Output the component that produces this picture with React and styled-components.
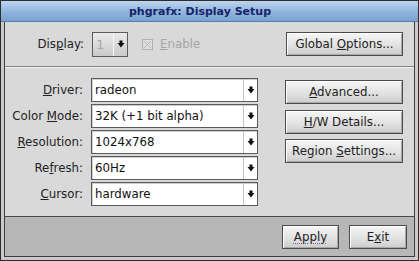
import React from 'react';
import styled, { createGlobalStyle } from 'styled-components';

const GlobalStyle = createGlobalStyle`
  html, body {
    margin: 0;
    padding: 0;
    background: #c8c8c8;
  }
  * {
    box-sizing: border-box;
  }
`;

const ArrowDown = () => (
  <svg width='8' height='8' viewBox='0 0 8 8'>
    <polygon points='2.5,0.5 5.5,0.5 5.5,3 7.5,3 4,7.5 0.5,3 2.5,3' fill='#111' />
  </svg>
);

const Key = ({ children }) => <u>{children}</u>;

const rows = [
  { id: 1, label: ['', 'D', 'river:'], value: 'radeon' },
  { id: 2, label: ['Color ', 'M', 'ode:'], value: '32K (+1 bit alpha)' },
  { id: 3, label: ['', 'R', 'esolution:'], value: '1024x768' },
  { id: 4, label: ['Re', 'f', 'resh:'], value: '60Hz' },
  { id: 5, label: ['', 'C', 'ursor:'], value: 'hardware' },
];

const sideButtons = [
  { id: 1, text: ['', 'A', 'dvanced...'] },
  { id: 2, text: ['', 'H', '/W Details...'] },
  { id: 3, text: ['Region ', 'S', 'ettings...'] },
];

export default function App() {
  return (
    <>
      <GlobalStyle />
      <WindowStyle>
        <TitleBarStyle>phgrafx: Display Setup</TitleBarStyle>
        <BodyStyle>
          <TopSectionStyle>
            <LabelStyle>
              Dis<Key>p</Key>lay:
            </LabelStyle>
            <SmallComboStyle>
              <SmallComboTextStyle>1</SmallComboTextStyle>
              <ComboArrowStyle $disabled>
                <ArrowDown />
              </ComboArrowStyle>
            </SmallComboStyle>
            <CheckRowStyle>
              <CheckBoxStyle>
                <svg width='9' height='9' viewBox='0 0 9 9'>
                  <path d='M1 1 L8 8 M8 1 L1 8' stroke='#b4b4b4' strokeWidth='1' />
                </svg>
              </CheckBoxStyle>
              <span>
                <Key>E</Key>nable
              </span>
            </CheckRowStyle>
            <SpacerStyle />
            <ButtonStyle $width='117px'>
              <span>
                Global <Key>O</Key>ptions...
              </span>
            </ButtonStyle>
          </TopSectionStyle>

          <MainSectionStyle>
            <FormGridStyle>
              {rows.map(row => (
                <React.Fragment key={row.id}>
                  <LabelStyle>
                    {row.label[0]}
                    <Key>{row.label[1]}</Key>
                    {row.label[2]}
                  </LabelStyle>
                  <ComboStyle>
                    <ComboTextStyle>{row.value}</ComboTextStyle>
                    <ComboArrowStyle>
                      <ArrowDown />
                    </ComboArrowStyle>
                  </ComboStyle>
                </React.Fragment>
              ))}
            </FormGridStyle>
            <SideButtonsStyle>
              {sideButtons.map(btn => (
                <ButtonStyle key={btn.id} $width='118px'>
                  <span>
                    {btn.text[0]}
                    <Key>{btn.text[1]}</Key>
                    {btn.text[2]}
                  </span>
                </ButtonStyle>
              ))}
            </SideButtonsStyle>
          </MainSectionStyle>

          <BottomBarStyle>
            <ButtonStyle $width='57px'>
              <FocusTextStyle>Apply</FocusTextStyle>
            </ButtonStyle>
            <ButtonStyle $width='58px'>
              <span>
                E<Key>x</Key>it
              </span>
            </ButtonStyle>
          </BottomBarStyle>
        </BodyStyle>
      </WindowStyle>
    </>
  );
}

const WindowStyle = styled.div`
  display: flex;
  flex-direction: column;
  width: 419px;
  height: 261px;
  border: 1px solid #2c2c2c;
  background: #cacaca;
  font-family: 'DejaVu Sans', 'Liberation Sans', sans-serif;
  font-size: 11.8px;
  color: #1c1c1c;
  overflow: hidden;
`;

const TitleBarStyle = styled.div`
  display: flex;
  align-items: center;
  justify-content: center;
  height: 21px;
  padding-right: 19px;
  background: linear-gradient(#bdd5ee, #8fb4dc 55%, #7aa3d2);
  border-bottom: 1px solid #5b7ea8;
  font-weight: bold;
  font-size: 11px;
  color: #16246a;
  flex-shrink: 0;
`;

const BodyStyle = styled.div`
  display: flex;
  flex-direction: column;
  flex: 1;
  margin: 0 3px 3px 3px;
  border: 1px solid #3e3e3e;
  border-top: none;
  background: #d9d9d9;
`;

const TopSectionStyle = styled.div`
  display: flex;
  align-items: center;
  height: 45px;
  padding: 0 11px 0 0;
  border-bottom: 1px solid #808080;
  box-shadow: 0 1px 0 #f4f4f4;

  & > span:first-child {
    width: 87px;
    flex-shrink: 0;
  }
`;

const LabelStyle = styled.span`
  text-align: right;
  white-space: nowrap;
  color: #222;
  padding-right: 8px;
`;

const SmallComboStyle = styled.div`
  display: flex;
  width: 36px;
  height: 25px;
  border: 1px solid #5c5c5c;
  background: linear-gradient(#ececec, #c9c9c9);
`;

const SmallComboTextStyle = styled.span`
  display: flex;
  align-items: center;
  flex: 1;
  padding-left: 3px;
  color: #a8a8a8;
  font-size: 13px;
`;

const ComboArrowStyle = styled.span`
  display: flex;
  align-items: center;
  justify-content: center;
  width: 14px;
  border-left: 1px solid ${props => (props.$disabled ? '#f6f6f6' : '#c4c4c4')};
`;

const CheckRowStyle = styled.div`
  display: flex;
  align-items: center;
  gap: 7px;
  margin-left: 14px;
  color: #a4a4a4;
`;

const CheckBoxStyle = styled.span`
  display: flex;
  align-items: center;
  justify-content: center;
  width: 11px;
  height: 11px;
  border: 1px solid #b0b0b0;
  background: #dedede;
`;

const SpacerStyle = styled.div`
  flex: 1;
`;

const ButtonStyle = styled.div`
  display: flex;
  align-items: center;
  justify-content: center;
  width: ${props => props.$width};
  height: 24px;
  border: 1px solid #4c4c4c;
  background: linear-gradient(#f6f6f6, #e4e4e4 50%, #cdcdcd);
  box-shadow: inset 1px 1px 0 #ffffff, inset -1px -1px 0 #a8a8a8;
  white-space: nowrap;
  color: #222;
`;

const FocusTextStyle = styled.span`
  text-decoration: underline dotted #6a5fb0;
  text-underline-offset: 2px;
`;

const MainSectionStyle = styled.div`
  display: flex;
  height: 150px;
  padding: 12px 11px 0 0;
  border-bottom: 1px solid #4a4a4a;
`;

const FormGridStyle = styled.div`
  display: grid;
  grid-template-columns: 86px 167px;
  grid-auto-rows: 24px;
  row-gap: 2px;
  align-items: center;
  margin-top: -1px;
`;

const ComboStyle = styled.div`
  display: flex;
  height: 24px;
  border: 1px solid #5a5a5a;
  background: #ffffff;
  box-shadow: inset 1px 1px 0 #cfcfcf;
`;

const ComboTextStyle = styled.span`
  display: flex;
  align-items: center;
  flex: 1;
  padding-left: 3px;
  color: #111;
`;

const SideButtonsStyle = styled.div`
  display: flex;
  flex-direction: column;
  gap: 6px;
  margin-left: auto;
  margin-top: 1px;

  & > div:nth-child(3) {
    margin-top: -1px;
  }
`;

const BottomBarStyle = styled.div`
  display: flex;
  align-items: center;
  justify-content: flex-end;
  gap: 10px;
  flex: 1;
  padding: 0 7px 0 0;
  background: #b7b7b7;
`;
